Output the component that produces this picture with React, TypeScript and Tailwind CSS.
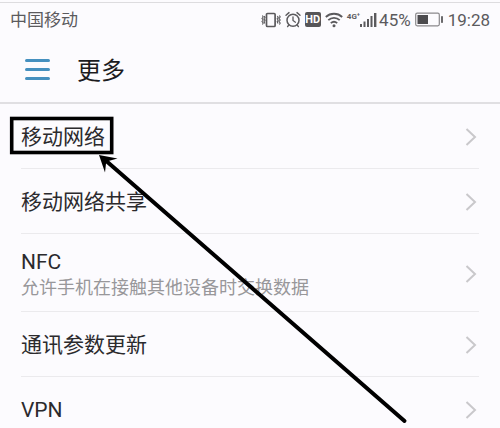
type Item = {
  title: string;
  desc?: string;
};

const items: Item[] = [
  { title: '移动网络' },
  { title: '移动网络共享' },
  { title: 'NFC', desc: '允许手机在接触其他设备时交换数据' },
  { title: '通讯参数更新' },
  { title: 'VPN' },
];

const VibrateIcon = () => (
  <svg width="20" height="18" viewBox="0 0 20 18" fill="none" stroke="currentColor">
    <rect x="5.5" y="2.5" width="8.6" height="13" rx="1" strokeWidth="1.7" />
    <path d="M1.4 4.5 2.2 6 1 7.5 2.2 9 1 10.5 2.2 12 1.4 13.5M3.2 5 4 6.4 3 7.8 4 9.2 3 10.6 3.8 12.5" strokeWidth="1.1" />
    <path d="M16.4 5 17.2 6.4 16.2 7.8 17.2 9.2 16.2 10.6 17 12.5M18.4 4.5 19.2 6 18 7.5 19.2 9 18 10.5 19.2 12 18.4 13.5" strokeWidth="1.1" />
  </svg>
);

const AlarmIcon = () => (
  <svg width="16" height="18" viewBox="0 0 16 18" fill="none" stroke="currentColor" strokeLinecap="round">
    <circle cx="8" cy="9.2" r="6" strokeWidth="1.5" />
    <path d="M8 5.8v3.7l2.4 1.7" strokeWidth="1.3" />
    <path d="M1 4.2 4 1.6M15 4.2 12 1.6M3.8 14 2.6 15.6M12.2 14l1.2 1.6" strokeWidth="1.4" />
  </svg>
);

const WifiIcon = () => (
  <svg width="18" height="18" viewBox="0 0 18 18" fill="none" stroke="currentColor" strokeWidth="1.8">
    <path d="M.8 6a12 12 0 0 1 16.4 0" />
    <path d="M3.3 9.2a8.3 8.3 0 0 1 11.4 0" />
    <path d="M5.8 12.2a4.8 4.8 0 0 1 6.4 0" />
    <circle cx="9" cy="14.8" r="1.5" fill="currentColor" stroke="none" />
  </svg>
);

const SignalIcon = () => (
  <svg width="17" height="18" viewBox="0 0 17 18" fill="currentColor">
    <rect x="0" y="13" width="2" height="3" />
    <rect x="3.5" y="10.5" width="2" height="5.5" />
    <rect x="7" y="8" width="2" height="8" />
    <rect x="10.5" y="5" width="2" height="11" />
    <rect x="14" y="2" width="2.4" height="14" />
  </svg>
);

const BatteryIcon = () => (
  <svg width="29" height="18" viewBox="0 0 29 18" fill="none">
    <rect x=".7" y="2.2" width="23.6" height="12.6" rx="1.5" stroke="#8a898c" strokeWidth="1.2" />
    <rect x="2.5" y="4" width="10.5" height="9" fill="#4c4b4e" />
    <rect x="26" y="5" width="2" height="7" rx=".8" fill="#6b6a6d" />
  </svg>
);

const ChevronIcon = () => (
  <svg width="12" height="18" viewBox="0 0 12 18" fill="none" stroke="#c9c8cb" strokeWidth="2" className="shrink-0">
    <path d="M1.5 1 10 9l-8.5 8" />
  </svg>
);

const StatusBar = () => (
  <div className="flex h-[34px] items-center justify-between border-t border-[#dddcdf] px-[10px] text-[17px] leading-6 text-[#5b5a5d]">
    <span>中国移动</span>
    <div className="flex items-center">
      <VibrateIcon />
      <span className="ml-1">
        <AlarmIcon />
      </span>
      <span className="ml-1 flex h-[15px] w-4 items-center justify-center rounded-xs bg-[#565558] text-[11px] font-bold leading-none text-white">
        HD
      </span>
      <span className="ml-1">
        <WifiIcon />
      </span>
      <span className="ml-1 h-[18px] text-[8px] font-bold leading-3">4G⁺</span>
      <SignalIcon />
      <span className="ml-[2px]">45%</span>
      <span className="ml-1 mr-1">
        <BatteryIcon />
      </span>
      <span>19:28</span>
    </div>
  </div>
);

const Header = () => (
  <header className="flex h-[68px] items-center gap-[27px] border-b-2 border-[#e0dfe2] pl-[25px]">
    <button type="button" aria-label="菜单" className="flex w-[25px] flex-col gap-[6px]">
      <span className="h-[3px] rounded-full bg-[#4590bf]" />
      <span className="h-[3px] rounded-full bg-[#4590bf]" />
      <span className="h-[3px] rounded-full bg-[#4590bf]" />
    </button>
    <h1 className="pt-1 text-[24px] leading-8 text-[#1c1b1e]">更多</h1>
  </header>
);

// box round the first entry, with an arrow pointing at it
const Annotation = () => (
  <svg
    width="420"
    height="330"
    viewBox="0 0 420 330"
    fill="none"
    stroke="#000"
    className="pointer-events-none absolute left-0 top-0"
  >
    <rect x="11.7" y="14.5" width="100" height="34" strokeWidth="3.6" />
    <path d="M104 55 404.5 317" strokeWidth="4" strokeLinecap="round" />
    <path d="M99 51 117.5 54.5 108.5 57 106 59.5 105 68.5Z" fill="#000" stroke="none" />
  </svg>
);

export default function App() {
  return (
    <div className="h-screen overflow-hidden bg-[#fcfbfe] pt-[2px] font-[Roboto,'Noto_Sans_CJK_SC',sans-serif]">
      <StatusBar />
      <Header />
      <main className="relative">
        <ul className="px-[21px]">
          {items.map((item) => (
            <li key={item.title} className="border-b border-[#ebeaed]">
              <button
                type="button"
                className={`flex w-full items-center justify-between pr-[2px] pt-[2px] text-left ${item.desc ? 'h-[77px]' : 'h-16'}`}
              >
                <span>
                  <span className="block text-[21px] leading-7 text-[#2b2a2d]">{item.title}</span>
                  {item.desc && (
                    <span className="block text-[18px] leading-6 text-[#98979a]">{item.desc}</span>
                  )}
                </span>
                <ChevronIcon />
              </button>
            </li>
          ))}
        </ul>
        <Annotation />
      </main>
    </div>
  );
}
